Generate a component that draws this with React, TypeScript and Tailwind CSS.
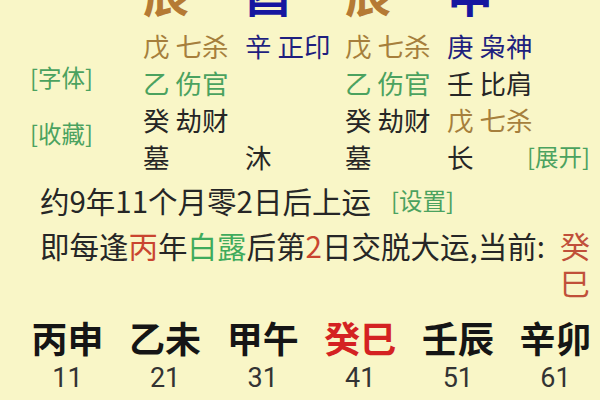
import React from "react";

const brown = "text-[#a67f3c]";
const navy = "text-[#1f1f7e]";
const green = "text-[#4ba25f]";
const ink = "text-[#262626]";

type Cell = { gan: string; shen: string; color: string };

const rows: Cell[][] = [
  [
    { gan: "戊", shen: "七杀", color: brown },
    { gan: "辛", shen: "正印", color: navy },
    { gan: "戊", shen: "七杀", color: brown },
    { gan: "庚", shen: "枭神", color: navy },
  ],
  [
    { gan: "乙", shen: "伤官", color: green },
    { gan: "", shen: "", color: ink },
    { gan: "乙", shen: "伤官", color: green },
    { gan: "壬", shen: "比肩", color: ink },
  ],
  [
    { gan: "癸", shen: "劫财", color: ink },
    { gan: "", shen: "", color: ink },
    { gan: "癸", shen: "劫财", color: ink },
    { gan: "戊", shen: "七杀", color: brown },
  ],
];

const dayun = [
  { gz: "丙申", age: 11 },
  { gz: "乙未", age: 21 },
  { gz: "甲午", age: 31 },
  { gz: "癸巳", age: 41, current: true },
  { gz: "壬辰", age: 51 },
  { gz: "辛卯", age: 61 },
];

const cols = "grid grid-cols-[102px_100px_102px_1fr]";

export default function App() {
  return (
    <div className="w-[600px] h-[400px] overflow-hidden bg-[#f9f6c7] font-['Noto_Sans_CJK_SC',sans-serif]">
      {/* pillars */}
      <div className="flex">
        <div className={`w-[143px] pl-[30px] pt-[62px] text-[23.5px] leading-[30px] ${green}`}>
          <div>[字体]</div>
          <div className="mt-[26px]">[收藏]</div>
        </div>
        <div className="flex-1">
          <div className={`${cols} h-[27px] text-[46px] leading-none font-bold`}>
            <div className="-mt-[31px] text-[#b57a34]">辰</div>
            <div className="-mt-[31px] text-[#1616a0]">酉</div>
            <div className="-mt-[31px] text-[#b57a34]">辰</div>
            <div className="-mt-[31px] text-[#1616a0]">申</div>
          </div>
          {rows.map((row, i) => (
            <div key={i} className={`${cols} h-[37px] text-[26.5px] leading-[37px]`}>
              {row.map((c, j) => (
                <div key={j} className={`${c.color} whitespace-nowrap`}>
                  {c.gan ? `${c.gan} ${c.shen}` : ""}
                </div>
              ))}
            </div>
          ))}
          <div className={`${cols} h-[37px] text-[26.5px] leading-[37px] ${ink}`}>
            <div>墓</div>
            <div>沐</div>
            <div>墓</div>
            <div className="flex justify-between pr-[10px]">
              <span>长</span>
              <span className={`text-[23.5px] ${green}`}>[展开]</span>
            </div>
          </div>
        </div>
      </div>

      {/* qiyun */}
      <div className={`mt-[7px] pl-[40px] flex items-center h-[37px] text-[29.5px] leading-[37px] ${ink}`}>
        <span>约9年11个月零2日后上运</span>
        <span className={`ml-[20px] text-[23.5px] ${green}`}>[设置]</span>
      </div>
      <div className={`mt-[8px] pl-[40px] pr-[10px] flex justify-between text-[29.5px] leading-[37px] ${ink}`}>
        <span className="whitespace-nowrap">
          即每逢<span className="text-[#c9452f]">丙</span>年
          <span className="text-[#3fab5c]">白露</span>后第
          <span className="text-[#c9452f]">2</span>日交脱大运,当前:
        </span>
        <span className="flex flex-col text-[30px] leading-[37px] text-[#c0503a]">
          <span>癸</span>
          <span>巳</span>
        </span>
      </div>

      {/* dayun */}
      <div className="mt-[14px] pl-[32px] pr-[9px] flex justify-between">
        {dayun.map((d) => (
          <div key={d.gz} className="flex flex-col items-center w-[71px]">
            <div
              className={`text-[36px] leading-[44px] font-bold whitespace-nowrap ${
                d.current ? "text-[#d42222]" : "text-[#151515]"
              }`}
            >
              {d.gz}
            </div>
            <div className="mt-[4px] text-[27px] leading-[30px] font-['Roboto',sans-serif] text-[#333333]">
              {d.age}
            </div>
          </div>
        ))}
      </div>
    </div>
  );
}
